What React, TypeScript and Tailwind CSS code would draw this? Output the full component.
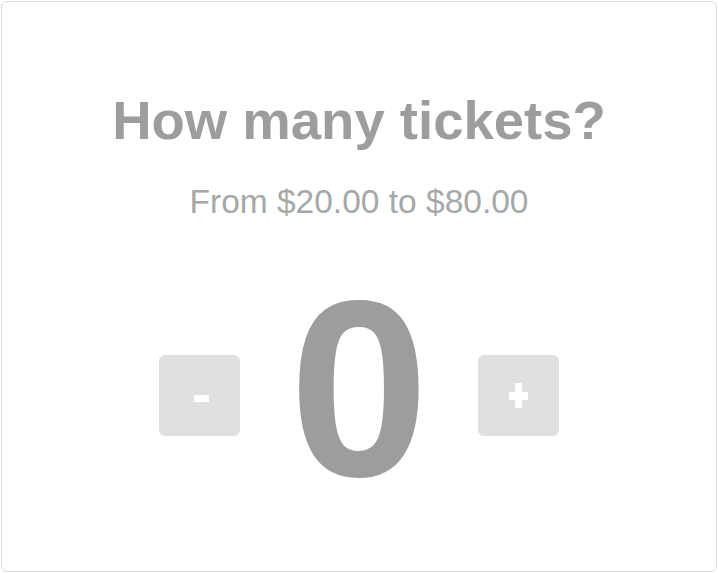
export default function App() {
  return (
    <div className="h-[573px] w-[718px] bg-white p-px font-['Liberation_Sans',Arial,sans-serif]">
      <div className="flex h-full flex-col items-center rounded-[6px] border border-[#dcdcdc] bg-white">
        <h1 className="mt-[86px] text-[54.5px] font-bold leading-[66px] text-[#9b9d9e]">How many tickets?</h1>
        <p className="mt-[28px] text-[33.5px] leading-[40px] text-[#a5a8a9]">From $20.00 to $80.00</p>
        <div className="mt-[67px] flex items-center gap-[49px]">
          <button aria-label="-" className="mt-[13px] flex h-[81px] w-[81px] items-center justify-center rounded-[6px] bg-[#e0e0e0]">
            <span className="ml-[4px] mt-[6px] h-[7px] w-[15px] bg-white" />
          </button>
          <span className="text-[251px] font-bold leading-[200px] text-[#9b9d9e]">0</span>
          <button aria-label="+" className="relative mt-[13px] flex h-[81px] w-[81px] items-center justify-center rounded-[6px] bg-[#e0e0e0]">
            <span className="absolute h-[8px] w-[19px] bg-white" />
            <span className="absolute h-[25px] w-[7px] bg-white" />
          </button>
        </div>
      </div>
    </div>
  )
}
